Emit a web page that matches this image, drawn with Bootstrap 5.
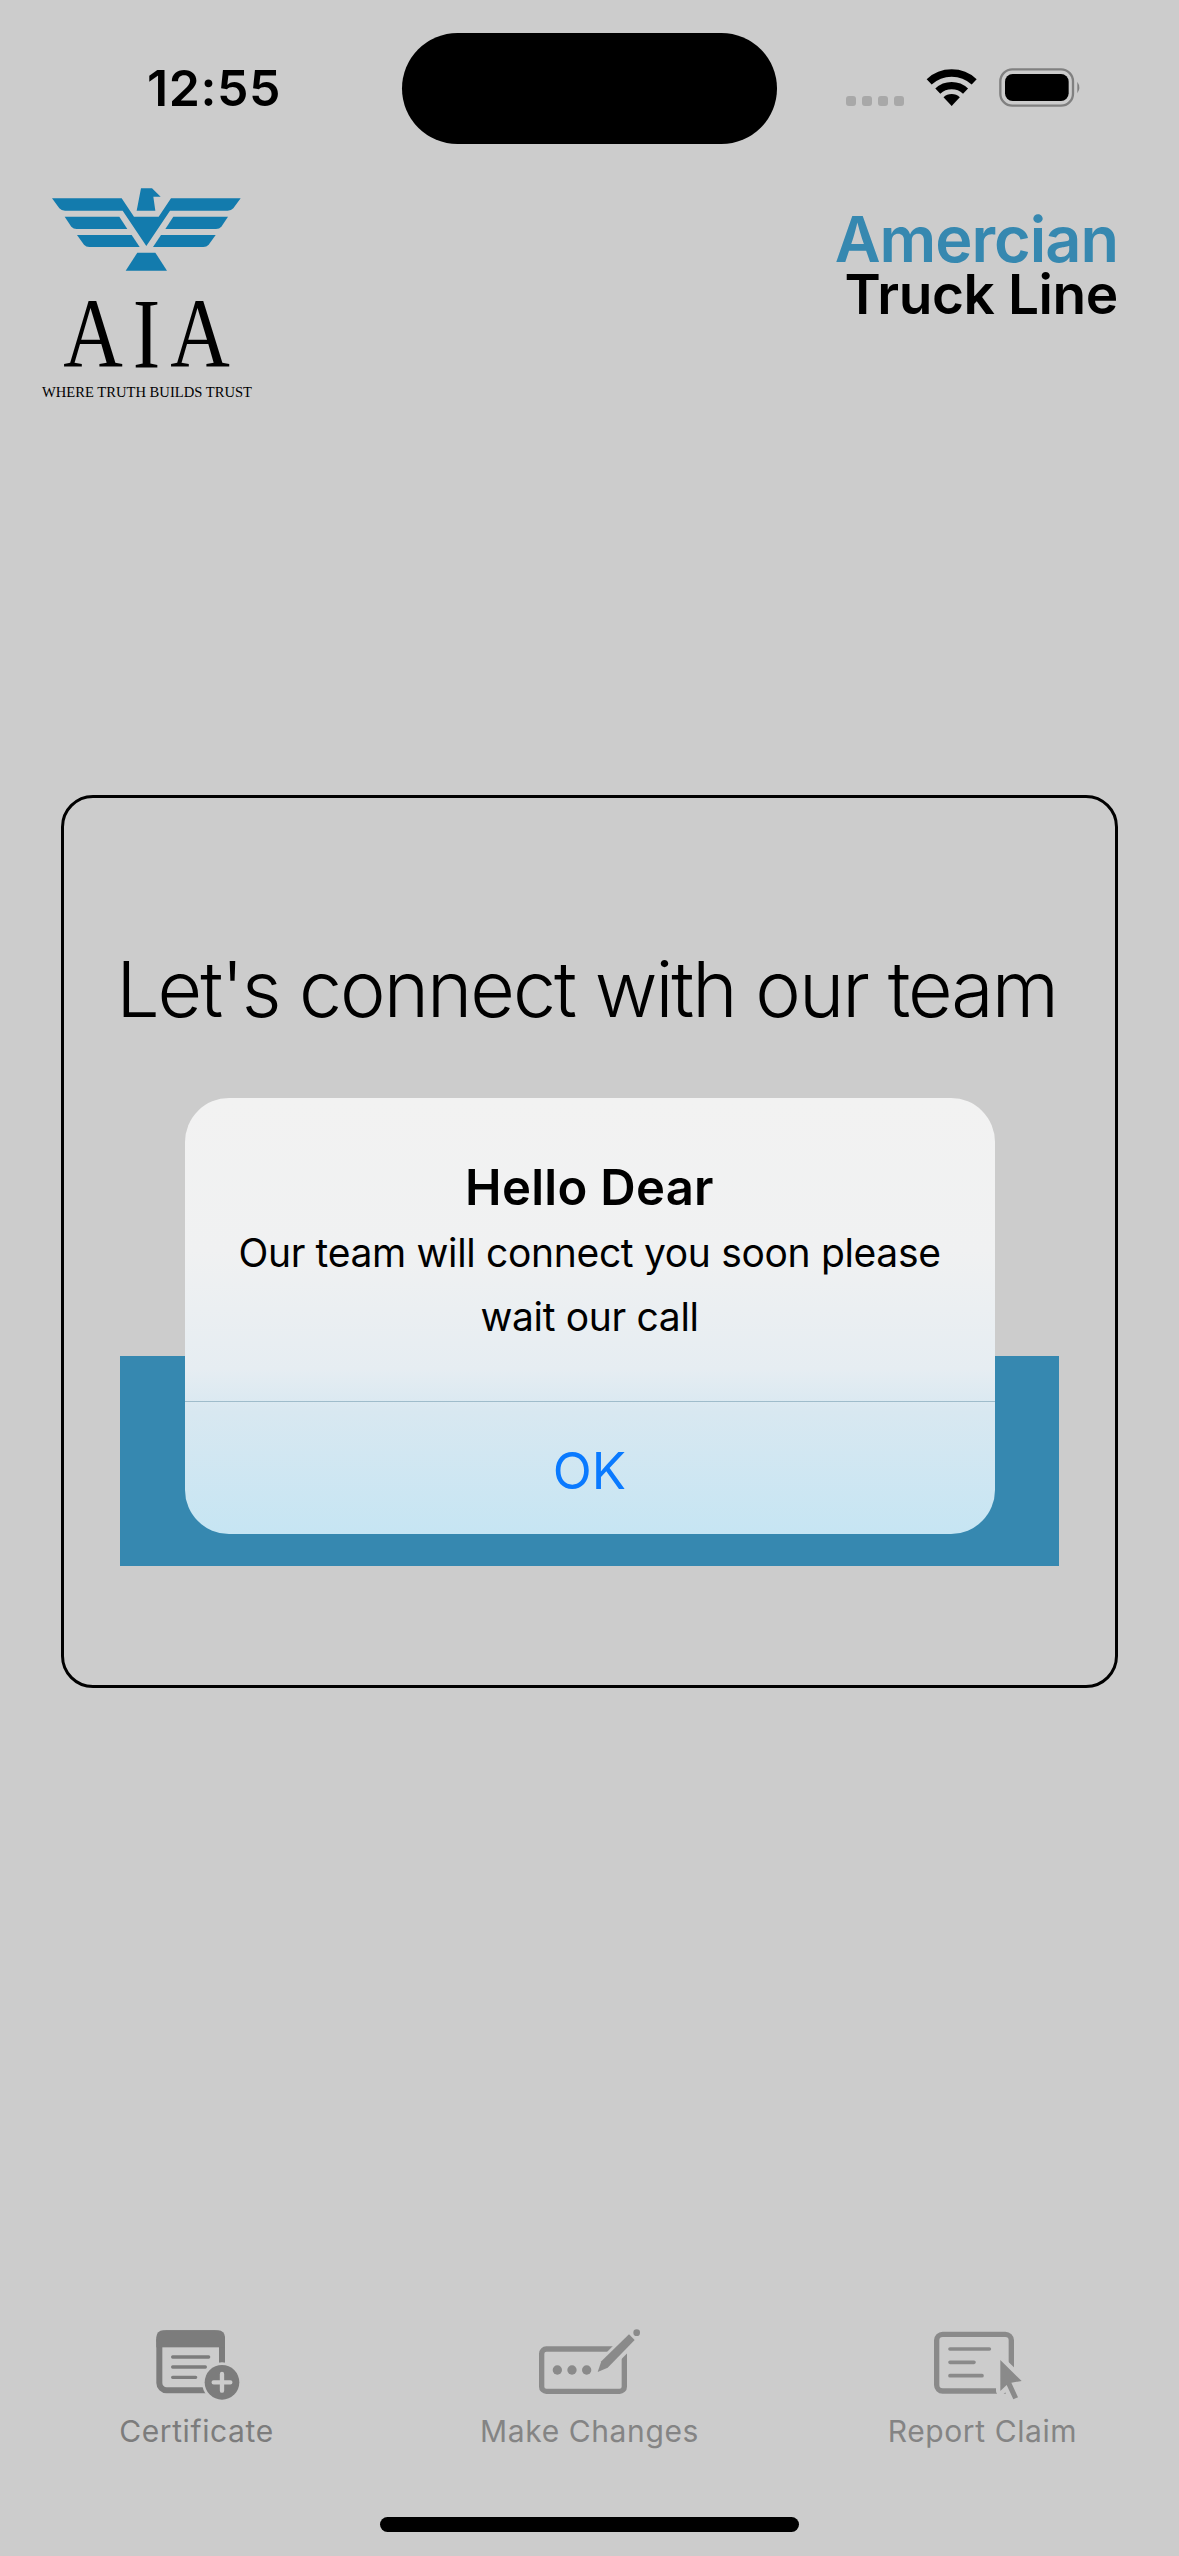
<!DOCTYPE html>
<html lang="en">
<head>
  <meta charset="UTF-8" />
  <title>Amercian Truck Line</title>
  <link href="https://cdn.jsdelivr.net/npm/bootstrap@5.3.3/dist/css/bootstrap.min.css" rel="stylesheet" />
  <style>
    body { background: #ccc; font-family: Inter, "Liberation Sans", sans-serif; color: #000; }
    .phone-page { width: 1179px; height: 2556px; overflow: hidden; }

    .status-row { height: 144px; padding-top: 33px; }
    .clock-slot { width: 402px; padding-left: 147px; font-size: 50px; font-weight: 600; letter-spacing: 0.6px; line-height: 111px; }
    .island { width: 375px; height: 111px; border-radius: 56px; background: #000; }
    .status-icons { width: 280px; height: 70px; margin-left: 43px; margin-bottom: 7px; }

    .top-row { padding: 26px 61px 0 30px; }
    .brand-logo { width: 240px; height: 240px; }
    .brand-name { margin-top: 40px; line-height: 1; }
    .brand-blue { color: #3688b0; font-size: 63px; font-weight: 600; letter-spacing: -1px; line-height: 58px; }
    .brand-dark { font-size: 55px; font-weight: 600; letter-spacing: -0.4px; line-height: 52px; }

    .connect-box { --bs-card-bg: transparent; --bs-card-border-color: #000; --bs-card-border-width: 3px; --bs-card-border-radius: 32px; margin: 385px 61px 0 61px; height: 893px; }
    .connect-title { font-size: 77px; font-weight: 300; letter-spacing: -2px; line-height: 90px; margin: 0; padding: 146px 6px 0 0; color: #000; white-space: nowrap; }
    .connect-btn { width: 939px; height: 210px; margin-top: 322px; background: #3688b0; align-self: center; }

    .alert-box { top: 1098px; width: 810px; height: 436px; border-radius: 44px; overflow: hidden;
      background: linear-gradient(180deg, #f2f2f2 0%, #f0f1f2 35%, #e6edf2 62%, #d8e8f1 72%, #c6e5f3 100%); }
    .alert-text { height: 303px; padding-top: 60px; }
    .alert-title { font-size: 49px; font-weight: 600; letter-spacing: 0.3px; line-height: 60px; margin: 0; }
    .alert-msg { font-size: 39px; letter-spacing: -0.33px; line-height: 64px; margin: 3px 0 0 0; }
    .alert-ok { height: 133px; padding-top: 4px; border-top: 1px solid #9fbccb; color: #0a7aff; font-size: 51px; line-height: 1; }

    .tab-name { font-size: 30px; letter-spacing: 0.6px; line-height: 40px; margin-top: 5px; color: #848484; }
    .tab-name-dark { color: #7c7c7c; }
    .tab-svg { display: block; height: 80px; margin: 0 auto; }
    .home-bar { width: 419px; height: 15px; border-radius: 8px; background: #000; margin: 66px auto 24px auto; }
  </style>
</head>
<body>
  <div class="phone-page position-relative d-flex flex-column">

    <div class="status-row d-flex align-items-center">
      <div class="clock-slot">12:55</div>
      <div class="island"></div>
      <svg class="status-icons" viewBox="0 0 840 210">
        <rect x="78" y="138" width="30" height="30" rx="9" fill="#a8a8a8" />
        <rect x="126" y="138" width="30" height="30" rx="9" fill="#a8a8a8" />
        <rect x="174" y="138" width="30" height="30" rx="9" fill="#a8a8a8" />
        <rect x="222" y="138" width="30" height="30" rx="9" fill="#a8a8a8" />
        <path d="M327.5 95.6A99 99 0 0 1 462.5 95.6" fill="none" stroke="#000" stroke-width="22" />
        <path d="M353.4 123.4A61 61 0 0 1 436.6 123.4" fill="none" stroke="#000" stroke-width="22" />
        <path d="M395 168L370.5 141.7A36 36 0 0 1 419.5 141.7Z" fill="#000" />
        <rect x="541" y="58" width="218" height="109" rx="36" fill="none" stroke="#808080" stroke-width="7" />
        <rect x="555" y="72" width="191" height="81" rx="23" fill="#000" />
        <path d="M772 95Q784 112 772 130Z" fill="#808080" />
      </svg>
    </div>

    <div class="top-row d-flex justify-content-between align-items-start">
      <svg class="brand-logo" viewBox="0 0 720 720">
        <g fill="#137bad">
          <path d="M333 55H366L392 80H370L376 122H320Z" />
          <path d="M66 85H275L312 140H386L423 85H632L610 115Q604 122 593 122H420L349 228L278 122H105Q94 122 88 115Z" />
          <path d="M104 140H268L292 177H140Q130 177 124 170Z" />
          <path d="M594 140H430L406 177H558Q568 177 574 170Z" />
          <path d="M141 195H305L329 231H178Q168 231 162 224Z" />
          <path d="M557 195H393L369 231H520Q530 231 536 224Z" />
          <path d="M322 248H376L411 302H287Z" />
        </g>
        <text transform="translate(100 590) scale(.825 1)" font-family="Liberation Serif" font-size="300" letter-spacing="36">AIA</text>
        <text x="36" y="680" font-family="Liberation Serif" font-size="44" textLength="630" lengthAdjust="spacingAndGlyphs">WHERE TRUTH BUILDS TRUST</text>
      </svg>
      <div class="brand-name text-end">
        <div class="brand-blue">Amercian</div>
        <div class="brand-dark">Truck Line</div>
      </div>
    </div>

    <div class="card connect-box">
      <h1 class="connect-title text-center">Let's connect with our team</h1>
      <div class="connect-btn"></div>
    </div>

    <div class="alert-box position-absolute start-50 translate-middle-x d-flex flex-column">
      <div class="alert-text text-center">
        <h2 class="alert-title">Hello Dear</h2>
        <p class="alert-msg">Our team will connect you soon please<br />wait our call</p>
      </div>
      <div class="alert-ok d-flex align-items-center justify-content-center">OK</div>
    </div>

    <div class="mt-auto">
      <div class="row g-0 text-center">
        <div class="col-4">
          <svg class="tab-svg" width="100" viewBox="170 80 300 240">
            <rect x="207" y="102" width="188" height="171" rx="22" fill="none" stroke="#7c7c7c" stroke-width="18" />
            <rect x="198" y="93" width="206" height="48" rx="20" fill="#7c7c7c" />
            <rect x="198" y="120" width="206" height="24" fill="#7c7c7c" />
            <path d="M247 173H355M247 203H345M247 234H316" fill="none" stroke="#7c7c7c" stroke-width="10" stroke-linecap="round" />
            <circle cx="395" cy="249" r="60" fill="#ccc" />
            <circle cx="395" cy="249" r="52" fill="#7c7c7c" />
            <path d="M395 224V274M370 249H420" fill="none" stroke="#ccc" stroke-width="13" stroke-linecap="round" />
          </svg>
          <div class="tab-name tab-name-dark">Certificate</div>
        </div>
        <div class="col-4">
          <svg class="tab-svg" width="120" viewBox="208 80 360 240">
            <rect x="243" y="149" width="248" height="127" rx="14" fill="none" stroke="#8a8a8a" stroke-width="16" />
            <path d="M418 212L520 108" fill="none" stroke="#ccc" stroke-width="46" />
            <path d="M411 218L422 186L505 105L522 122L441 205Z" fill="#8a8a8a" />
            <circle cx="528" cy="100" r="10" fill="#8a8a8a" />
            <circle cx="290" cy="212" r="14" fill="#8a8a8a" />
            <circle cx="334" cy="212" r="14" fill="#8a8a8a" />
            <circle cx="378" cy="212" r="14" fill="#8a8a8a" />
          </svg>
          <div class="tab-name">Make Changes</div>
        </div>
        <div class="col-4">
          <svg class="tab-svg" width="100" viewBox="187 80 300 240">
            <rect x="198" y="105" width="224" height="170" rx="18" fill="none" stroke="#8a8a8a" stroke-width="16" />
            <path d="M238 149H356M238 189H310M238 229H334" fill="none" stroke="#8a8a8a" stroke-width="11" stroke-linecap="round" />
            <path d="M389 182L453 245L422 250L442 294L428 300L408 257L389 275Z" fill="#8a8a8a" stroke="#ccc" stroke-width="26" paint-order="stroke" stroke-linejoin="round" />
          </svg>
          <div class="tab-name">Report Claim</div>
        </div>
      </div>
      <div class="home-bar"></div>
    </div>

  </div>
  <script src="https://cdn.jsdelivr.net/npm/bootstrap@5.3.3/dist/js/bootstrap.bundle.min.js"></script>
</body>
</html>
